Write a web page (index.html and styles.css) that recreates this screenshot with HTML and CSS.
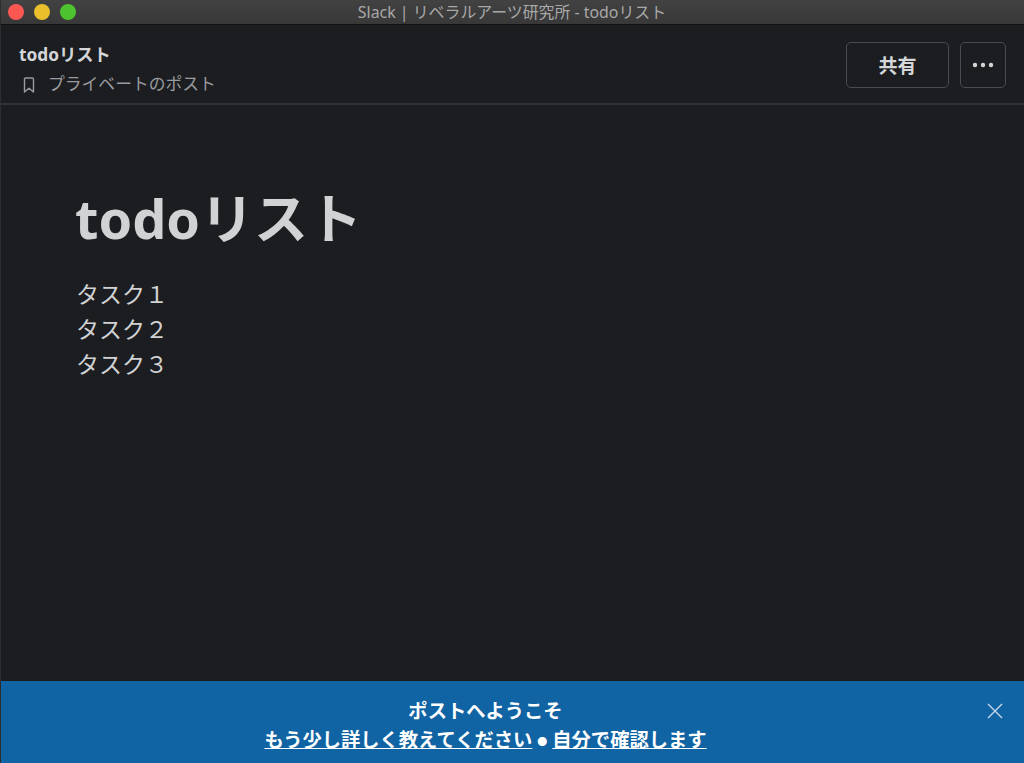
FILE: index.html
```html
<!DOCTYPE html>
<html lang="ja">
<head>
    <meta charset="UTF-8">
    <title>Slack | リベラルアーツ研究所 - todoリスト</title>
    <link rel="stylesheet" href="styles.css">
</head>
<body>
<div class="window">
    <div class="titlebar">
        <div class="lights">
            <span class="light red"></span>
            <span class="light yellow"></span>
            <span class="light green"></span>
        </div>
        <div class="title">Slack | リベラルアーツ研究所 - todoリスト</div>
    </div>
    <div class="head">
        <div class="head-info">
            <div class="head-name">todoリスト</div>
            <div class="head-sub">
                <svg class="bookmark" width="12" height="16" viewBox="0 0 12 16" fill="none" stroke="currentColor" stroke-width="1.4"><path d="M1.5 15V2.2C1.5 1.5 2 1 2.7 1h6.6c.7 0 1.2.5 1.2 1.2V15L6 11.2z" stroke-linejoin="round"/></svg>
                <span>プライベートのポスト</span>
            </div>
        </div>
        <div class="head-btns">
            <div class="btn share">共有</div>
            <div class="btn more">
                <svg width="22" height="6" viewBox="0 0 22 6" fill="currentColor"><circle cx="3" cy="3" r="2.2"/><circle cx="11" cy="3" r="2.2"/><circle cx="19" cy="3" r="2.2"/></svg>
            </div>
        </div>
    </div>
    <div class="post">
        <h1>todoリスト</h1>
        <p>タスク１</p>
        <p>タスク２</p>
        <p>タスク３</p>
    </div>
    <div class="banner">
        <div class="banner-text">
            <div class="banner-title">ポストへようこそ</div>
            <div class="banner-links"><a href="#">もう少し詳しく教えてください</a> <span class="dot">●</span> <a href="#">自分で確認します</a></div>
        </div>
        <svg class="close" width="16" height="16" viewBox="0 0 16 16" stroke="currentColor" stroke-width="1.4" fill="none"><path d="M1 1l14 14M15 1L1 15"/></svg>
    </div>
</div>
</body>
</html>
```

FILE: styles.css
```css
* { margin: 0; padding: 0; box-sizing: border-box; }
html, body { height: 100%; }
body { background: #1b1d21; font-family: "Noto Sans", "Noto Sans CJK JP", sans-serif; overflow: hidden; }
.window { height: 763px; display: flex; flex-direction: column; border-left: 1px solid #2c2d30; }

.titlebar { height: 25px; flex: none; position: relative; display: flex; align-items: center; justify-content: center;
    background: linear-gradient(#424242, #383838); border-bottom: 1px solid #111; }
.lights { position: absolute; left: 7px; top: 4px; display: flex; gap: 10px; }
.light { width: 16px; height: 16px; border-radius: 50%; }
.red { background: #fc5753; }
.yellow { background: #e9bf2b; }
.green { background: #4dc32f; }
.title { color: #a8a8a8; font-size: 15.9px; line-height: 24px; margin-right: 1px; }

.head { height: 80px; flex: none; display: flex; justify-content: space-between; align-items: center;
    padding: 1px 18px 0 18px; border-bottom: 2px solid #303237; }
.head-info { padding-top: 10px; }
.head-name { color: #d5d6d8; font-size: 17.3px; font-weight: bold; line-height: 20px; margin-bottom: 9px; }
.head-sub { display: flex; align-items: center; color: #9a9b9e; font-size: 16.8px; line-height: 20px; }
.bookmark { margin: 2px 13px 0 4px; }
.head-btns { display: flex; gap: 11px; }
.btn { height: 46px; margin-top: 1px; border: 1px solid #4a4c50; border-radius: 5px; color: #d5d6d8; display: flex; align-items: center; justify-content: center; }
.share { width: 103px; font-size: 19px; font-weight: bold; }
.more { width: 46px; }

.post { flex: 1; padding: 75px 75px 0; color: #d1d2d3; }
.post h1 { font-size: 54px; line-height: 76px; font-weight: bold; margin: 0 0 21px -1px; }
.post p { font-size: 23px; line-height: 35px; }

.banner { height: 82px; flex: none; position: relative; display: flex; justify-content: center; align-items: center; background: #1164a3; color: #fff; }
.banner-text { text-align: center; font-size: 19.3px; font-weight: bold; line-height: 29px; margin-left: -54px; padding-top: 8px; }
.banner-links a { color: #fff; text-decoration: underline; }
.dot { font-size: 10px; vertical-align: 1px; }
.close { position: absolute; right: 21px; top: 22px; color: #c3d8e8; }
```
